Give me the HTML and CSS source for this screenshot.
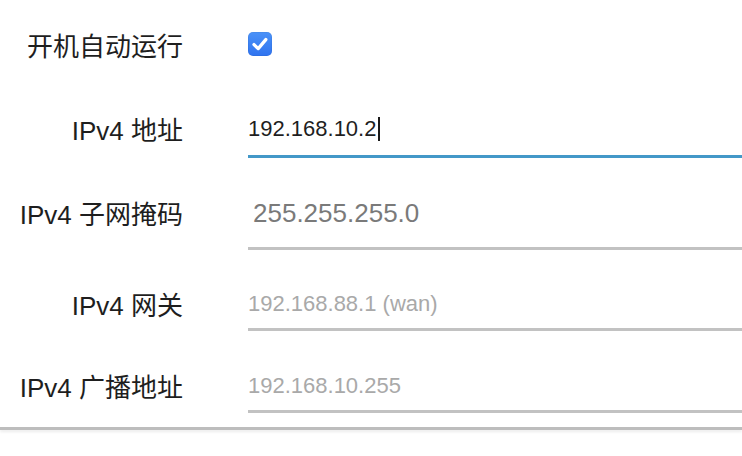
FILE: index.html
```html
<!DOCTYPE html>
<html lang="zh-CN">
<head>
<meta charset="utf-8">
<link rel="stylesheet" href="styles.css">
</head>
<body>
<form class="form">
  <div class="row row-auto">
    <div class="label">开机自动运行</div>
    <div class="control">
      <span class="checkbox">
        <svg viewBox="0 0 24 24" width="24" height="24"><path d="M6 12.6 L10.2 16.6 L17.8 7.6" fill="none" stroke="#fff" stroke-width="3.3" stroke-linecap="round" stroke-linejoin="round"/></svg>
      </span>
    </div>
  </div>
  <div class="row row-addr">
    <div class="label">IPv4 地址</div>
    <div class="field field-focus"><span class="value">192.168.10.2</span><span class="caret"></span></div>
  </div>
  <div class="row row-mask">
    <div class="label">IPv4 子网掩码</div>
    <div class="field field-big"><span class="value muted">255.255.255.0</span></div>
  </div>
  <div class="row row-gw">
    <div class="label">IPv4 网关</div>
    <div class="field"><span class="value hint">192.168.88.1 (wan)</span></div>
  </div>
  <div class="row row-bc">
    <div class="label">IPv4 广播地址</div>
    <div class="field"><span class="value hint">192.168.10.255</span></div>
  </div>
</form>
<div class="rule"></div>
</body>
</html>
```
FILE: styles.css
```css
html, body {
  margin: 0;
  padding: 0;
  background: #ffffff;
  overflow: hidden;
}
body {
  width: 742px;
  height: 456px;
  font-family: "Liberation Sans", "Noto Sans CJK SC", sans-serif;
  color: #222222;
}
.form {
  display: flex;
  flex-direction: column;
  padding-top: 20px;
}
.row {
  display: grid;
  grid-template-columns: 183px 1fr;
  column-gap: 65px;
  align-items: stretch;
}
.label {
  display: flex;
  align-items: center;
  justify-content: flex-end;
  font-size: 26px;
  white-space: nowrap;
  padding-bottom: 5px;
  color: #1e1e1e;
}
.row-auto .label { padding-bottom: 0; }
.row-auto { height: 48px; }
.control {
  display: flex;
  align-items: center;
}
.checkbox {
  display: block;
  width: 24px;
  height: 24px;
  border-radius: 5px;
  background: linear-gradient(#4a92f8, #2f73ef);
  box-shadow: inset 0 0 0 0.5px rgba(0,0,0,0.08);
}
.checkbox svg { display: block; }
.field {
  display: flex;
  align-items: center;
  height: 48px;
  border-bottom: 3px solid #c2c2c2;
  font-size: 22px;
  white-space: nowrap;
}
.row-addr { margin-top: 35px; }
.row-addr .field { height: 52px; }
.row-mask { margin-top: 21px; }
.row-mask .field { height: 68px; }
.row-gw { margin-top: 30px; }
.row-bc { margin-top: 31px; }
.field-focus { border-bottom-color: #4398c8; }
.field-big {
  font-size: 26px;
  padding-left: 5px;
}
.value { color: #1f1f1f; }
.muted { color: #7a7a7a; }
.hint { color: #a9a9a9; }
.caret {
  display: inline-block;
  width: 2px;
  height: 24px;
  margin-left: 2px;
  background: #1a1a1a;
}
.rule {
  margin-top: 14px;
  height: 3px;
  background: #bdbdbd;
  box-shadow: 0 2px 3px rgba(0,0,0,0.08);
}
```
